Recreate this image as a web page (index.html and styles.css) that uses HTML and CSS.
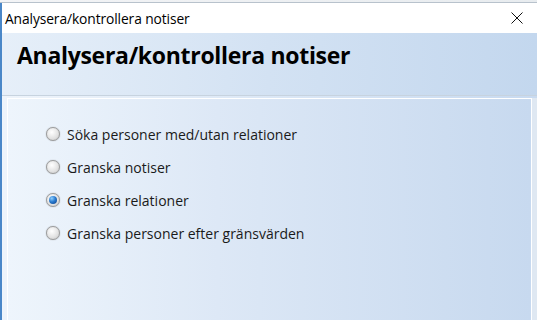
FILE: index.html
```html
<!DOCTYPE html>
<html>
<head>
<meta charset="utf-8">
<link rel="stylesheet" href="styles.css">
</head>
<body>
<div class="bgstrip"></div>
<div class="window">
  <div class="titlebar">
    <span class="title">Analysera/kontrollera notiser</span>
    <svg class="close" width="12" height="12" viewBox="0 0 12 12"><path d="M0.5 0.5L11.5 11.5M11.5 0.5L0.5 11.5" stroke="#111" stroke-width="1" fill="none"/></svg>
  </div>
  <div class="header"><h1>Analysera/kontrollera notiser</h1></div>
  <div class="body">
    <div class="panel">
      <label class="opt"><span class="radio"></span><span>Söka personer med/utan relationer</span></label>
      <label class="opt"><span class="radio"></span><span>Granska notiser</span></label>
      <label class="opt"><span class="radio checked"></span><span>Granska relationer</span></label>
      <label class="opt"><span class="radio"></span><span>Granska personer efter gränsvärden</span></label>
    </div>
    <div class="rightedge"></div>
  </div>
</div>
</body>
</html>
```
FILE: styles.css
```css
html, body { margin: 0; padding: 0; }
body {
  width: 537px; height: 320px; overflow: hidden;
  font-family: "Open Sans", "Noto Sans", sans-serif;
  background: #e9eef3;
}
.bgstrip {
  height: 3px;
  background: linear-gradient(to right, #f3f4f6, #e8ecef);
  border-bottom: 1px solid #b8c2cc;
  box-sizing: border-box;
}
.window {
  border-left: 2px solid #4a87c8;
  height: 317px;
  display: flex; flex-direction: column;
}
.titlebar {
  height: 30px; background: #fff;
  display: flex; align-items: center; justify-content: space-between;
  padding: 0 14px 0 3px;
}
.title { font-size: 13.8px; color: #000; letter-spacing: -0.1px; }
.close { display: block; }
.header {
  height: 63px; box-sizing: border-box;
  background: linear-gradient(to right, #e6eff9 0%, #d3e2f3 50%, #c3d7ee 100%);
  padding: 6px 0 0 15px;
  border-bottom: 1px solid #c7d3df;
}
h1 {
  margin: 0; font-size: 23px; font-weight: 700; color: #000;
  letter-spacing: -0.3px;
}
.body {
  flex: 1; display: flex;
  background: linear-gradient(to right, #eef4fb, #c8daf0);
  padding: 2px 0 0 5px;
}
.panel {
  flex: 1;
  border-top: 1px solid #fff; border-left: 1px solid #fff;
  background: linear-gradient(to right, #eef5fc 0%, #dde8f6 40%, #c7d9ef 100%);
  padding: 24px 0 0 38px;
  display: flex; flex-direction: column; gap: 11px;
}
.opt {
  display: flex; align-items: center; gap: 7px;
  font-size: 14px; color: #1a1a1a; height: 22px;
}
.radio {
  width: 12px; height: 12px; border-radius: 50%;
  border: 1px solid #9a9a9a;
  background: radial-gradient(circle at 40% 35%, #fff 0%, #e4e4e4 55%, #c9c9c9 100%);
  box-shadow: 0 0 1px #888;
  position: relative;
  flex: none;
}
.radio.checked::after {
  content: ""; position: absolute; left: 2px; top: 2px;
  width: 8px; height: 8px; border-radius: 50%;
  background: radial-gradient(circle at 35% 30%, #8fd0ff 0%, #2a7bd0 45%, #0b3e86 100%);
}
.rightedge {
  width: 5px;
  border-left: 1px solid #fff;
  background: #dfe8f2;
}
```
